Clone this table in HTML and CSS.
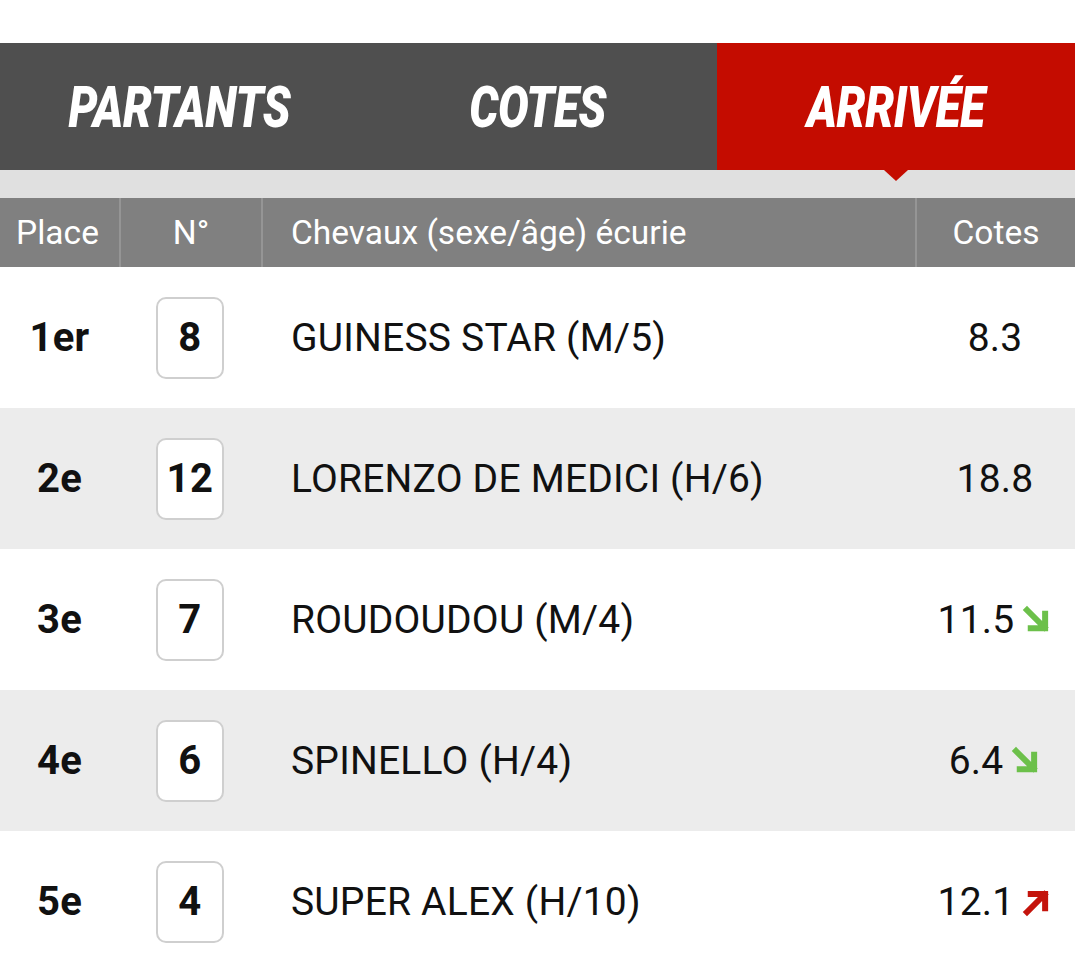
FILE: index.html
```html
<!DOCTYPE html>
<html lang="fr">
<head>
<meta charset="utf-8">
<title>Arrivée</title>
<link rel="stylesheet" href="styles.css">
</head>
<body>
<div class="top-space"></div>
<nav class="tabs">
  <div class="tab"><span class="tab-label">PARTANTS</span></div>
  <div class="tab"><span class="tab-label">COTES</span></div>
  <div class="tab active"><span class="tab-label">ARRIVÉE</span><span class="caret"></span></div>
</nav>
<div class="strip"></div>
<div class="table">
  <div class="row head">
    <div class="c c-place">Place</div>
    <div class="c c-num">N°</div>
    <div class="c c-name">Chevaux (sexe/âge) écurie</div>
    <div class="c c-cote">Cotes</div>
  </div>
  <div class="row">
    <div class="c c-place"><b>1er</b></div>
    <div class="c c-num"><span class="num">8</span></div>
    <div class="c c-name">GUINESS STAR (M/5)</div>
    <div class="c c-cote"><span>8.3</span></div>
  </div>
  <div class="row alt">
    <div class="c c-place"><b>2e</b></div>
    <div class="c c-num"><span class="num">12</span></div>
    <div class="c c-name">LORENZO DE MEDICI (H/6)</div>
    <div class="c c-cote"><span>18.8</span></div>
  </div>
  <div class="row">
    <div class="c c-place"><b>3e</b></div>
    <div class="c c-num"><span class="num">7</span></div>
    <div class="c c-name">ROUDOUDOU (M/4)</div>
    <div class="c c-cote"><span>11.5</span><svg class="arrow down" viewBox="0 0 24 24"><path d="M4 4 L18 18 M18.5 7 L18.5 18.5 L7 18.5"/></svg></div>
  </div>
  <div class="row alt">
    <div class="c c-place"><b>4e</b></div>
    <div class="c c-num"><span class="num">6</span></div>
    <div class="c c-name">SPINELLO (H/4)</div>
    <div class="c c-cote"><span>6.4</span><svg class="arrow down" viewBox="0 0 24 24"><path d="M4 4 L18 18 M18.5 7 L18.5 18.5 L7 18.5"/></svg></div>
  </div>
  <div class="row">
    <div class="c c-place"><b>5e</b></div>
    <div class="c c-num"><span class="num">4</span></div>
    <div class="c c-name">SUPER ALEX (H/10)</div>
    <div class="c c-cote"><span>12.1</span><svg class="arrow up" viewBox="0 0 24 24"><path d="M4 20 L18 6 M7 5.5 L18.5 5.5 L18.5 17"/></svg></div>
  </div>
</div>
</body>
</html>
```

FILE: styles.css
```css
* { box-sizing: border-box; }
html, body { margin: 0; padding: 0; background: #fff; }
body { font-family: Roboto, "Noto Sans", sans-serif; color: #111; width: 1075px; overflow: hidden; }

.top-space { height: 43px; background: #fff; }

.tabs { display: flex; height: 127px; background: #4f4f4f; }
.tab { flex: 1 1 0; display: flex; align-items: center; justify-content: center; position: relative; }
.tab.active { background: #c40c00; }
.tab-label {
  display: inline-block;
  color: #fff;
  font-family: Roboto, sans-serif;
  font-weight: 900;
  font-style: italic;
  font-size: 58px;
  letter-spacing: -0.5px;
  transform: scaleX(0.79);
  line-height: 1;
}
.caret {
  position: absolute;
  left: 50%;
  bottom: -11px;
  margin-left: -12px;
  width: 0; height: 0;
  border-left: 12px solid transparent;
  border-right: 12px solid transparent;
  border-top: 11px solid #c40c00;
}

.strip { height: 28px; background: #e0e0e0; }

.row {
  display: grid;
  grid-template-columns: 119px 142px 654px 160px;
  height: 141px;
  background: #fff;
}
.row.alt { background: #ececec; }
.row.head { height: 69px; background: #808080; color: #fff; font-size: 33.5px; }
.row.head .c + .c { border-left: 2px solid #959595; }
.row.head .c-place { padding-right: 4px; }
.c { display: flex; align-items: center; justify-content: center; }
.c-name { justify-content: flex-start; padding-left: 30px; }
.row.head .c-name { padding-left: 28px; }

.row:not(.head) { font-size: 39px; letter-spacing: 0.2px; color: #111; }
.c-place b { font-weight: 700; font-size: 40px; letter-spacing: 0.3px; }
.num {
  display: flex; align-items: center; justify-content: center;
  width: 68px; height: 82px;
  border: 2px solid #cfcfcf; border-radius: 10px;
  background: #fff;
  font-weight: 700; font-size: 40px; letter-spacing: 0.5px;
}
.c-cote { gap: 8px; }
.arrow { width: 30px; height: 30px; fill: none; stroke-width: 4.8; stroke-linecap: square; stroke-linejoin: miter; }
.arrow.down { stroke: #6cc04a; }
.arrow.up { stroke: #c4140c; }
```
